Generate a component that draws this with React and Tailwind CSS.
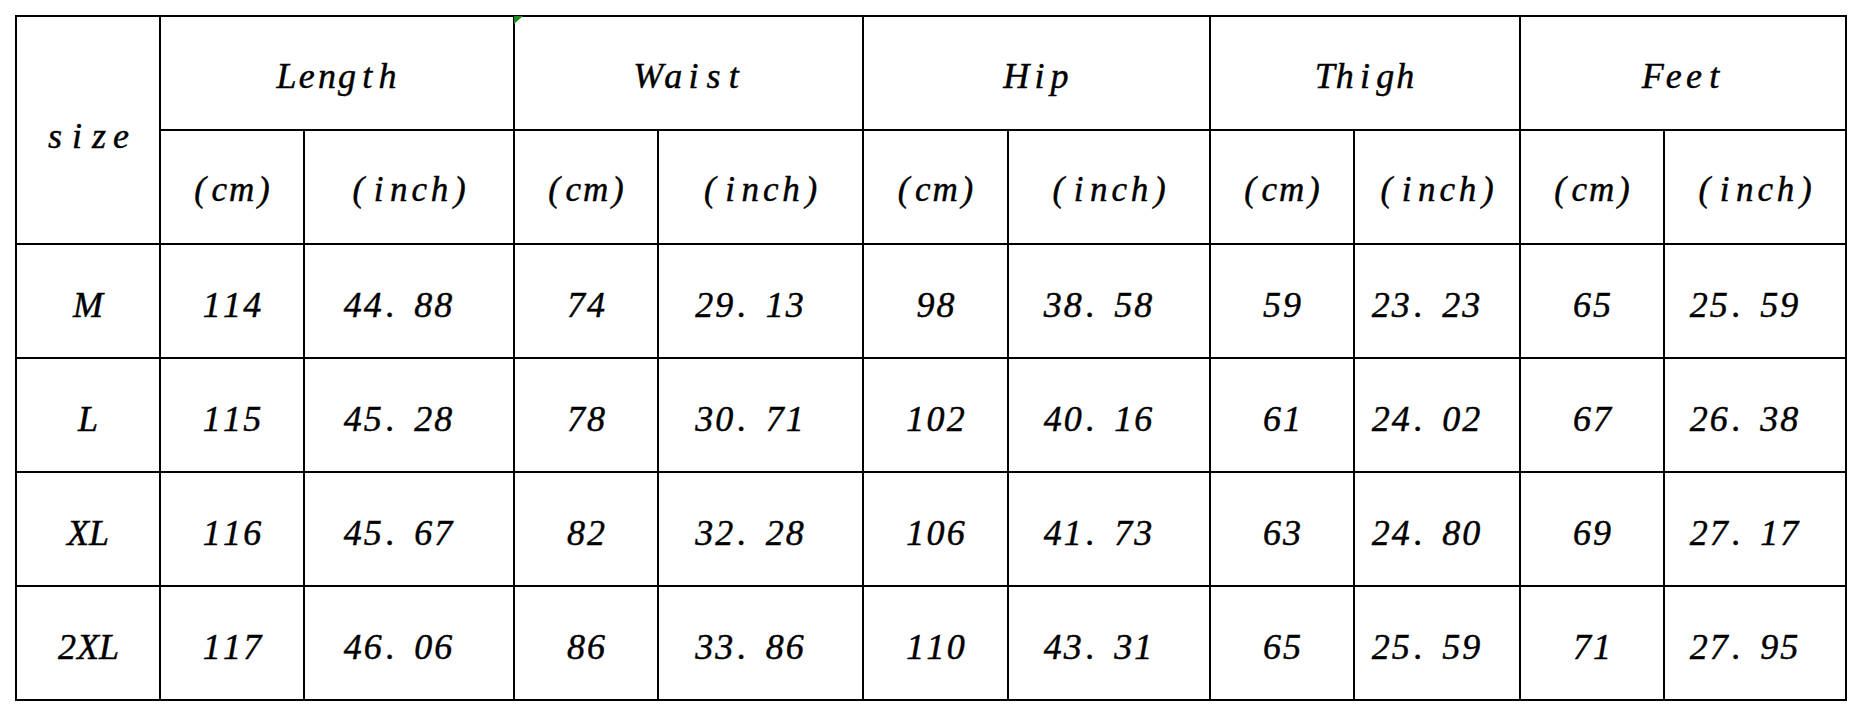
import React from "react";

const groups = ["Length", "Waist", "Hip", "Thigh", "Feet"];

const rows = [
  ["M", "114", "44.88", "74", "29.13", "98", "38.58", "59", "23.23", "65", "25.59"],
  ["L", "115", "45.28", "78", "30.71", "102", "40.16", "61", "24.02", "67", "26.38"],
  ["XL", "116", "45.67", "82", "32.28", "106", "41.73", "63", "24.80", "69", "27.17"],
  ["2XL", "117", "46.06", "86", "33.86", "110", "43.31", "65", "25.59", "71", "27.95"],
];

// half-width boxes per char, like the old CJK font the sheet was typed in
const Mono = ({ text, box = "min-w-[0.5em]" }) => {
  const chars = [];
  [...text].forEach((c) => {
    chars.push(c);
    if (c === ".") chars.push(" "); // full width dot
  });
  return (
    <span className="inline-flex whitespace-nowrap">
      {chars.map((c, i) => (
        <span
          key={i}
          className={`inline-block text-center ${c === "." || c === " " ? "min-w-[0.42em]" : box}`}
        >
          {c === " " ? "\u00a0" : c}
        </span>
      ))}
    </span>
  );
};

const cell = "bg-white flex items-center justify-center leading-none";

export default function App() {
  return (
    <div className="w-[1862px] h-[716px] bg-white pl-[15px] pt-[15px] relative font-['Liberation_Serif',serif] italic text-black [-webkit-text-stroke:0.45px_black]">
      <div className="inline-grid bg-black p-[2px] gap-[2px] grid-cols-[142px_142px_208px_142px_203px_143px_200px_142px_164px_142px_180px] grid-rows-[repeat(6,112px)]">
        <div className={`${cell} row-span-2 text-[36px] pt-[11px]`}>
          <Mono text="size" box="min-w-[0.61em]" />
        </div>
        {groups.map((g) => (
          <div key={g} className={`${cell} col-span-2 text-[36px] pt-[5px]`}>
            <Mono text={g} box="min-w-[0.56em]" />
          </div>
        ))}
        {groups.map((g) => (
          <React.Fragment key={g + "-u"}>
            <div className={`${cell} text-[35px] pt-[4px]`}>
              <Mono text="(cm)" box="min-w-[0.55em]" />
            </div>
            <div className={`${cell} text-[35px] pt-[4px]`}>
              <Mono text="(inch)" box="min-w-[0.58em]" />
            </div>
          </React.Fragment>
        ))}
        {rows.map((r) =>
          r.map((v, i) => (
            <div
              key={r[0] + i}
              className={`${cell} text-[36px] pt-[8px] ${v.includes(".") ? "pr-[22px]" : ""}`}
            >
              <Mono text={v} box={i === 0 ? "min-w-[0.56em]" : "min-w-[0.56em]"} />
            </div>
          ))
        )}
      </div>
      <svg className="absolute left-[514px] top-[16px]" width="10" height="9" viewBox="0 0 10 9">
        <polygon points="0,0 9,0 0,8" fill="#1f8a1f" />
      </svg>
    </div>
  );
}
